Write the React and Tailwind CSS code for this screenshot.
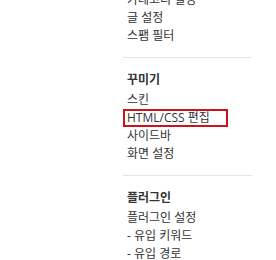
export default function App() {
  const font = { fontFamily: '"Open Sans", "Noto Sans CJK KR", sans-serif' }

  return (
    <div className="h-[260px] w-[276px] overflow-hidden bg-white text-[12px] leading-[18px] text-[#333]" style={font}>
      <div className="ml-[123px] mt-[-9px] w-[129px]">
        <ul className="pb-3 pl-1">
          <li>카테고리 설정</li>
          <li>글 설정</li>
          <li>스팸 필터</li>
        </ul>

        <div className="border-t border-[#e5e5e5] pb-3 pt-[13px]">
          <h3 className="pl-1 font-bold">꾸미기</h3>
          <ul className="mt-[2px]">
            <li className="pl-1">스킨</li>
            <li>
              <span className="block w-[105px] border-2 border-[#d0101b] pl-[2px] leading-[14px]">
                HTML/CSS 편집
              </span>
            </li>
            <li className="pl-1">사이드바</li>
            <li className="pl-1">화면 설정</li>
          </ul>
        </div>

        <div className="border-t border-[#e5e5e5] pt-[13px]">
          <h3 className="pl-1 font-bold">플러그인</h3>
          <ul className="mt-[2px] pl-1">
            <li>플러그인 설정</li>
            <li>- 유입 키워드</li>
            <li>- 유입 경로</li>
          </ul>
        </div>
      </div>
    </div>
  )
}
